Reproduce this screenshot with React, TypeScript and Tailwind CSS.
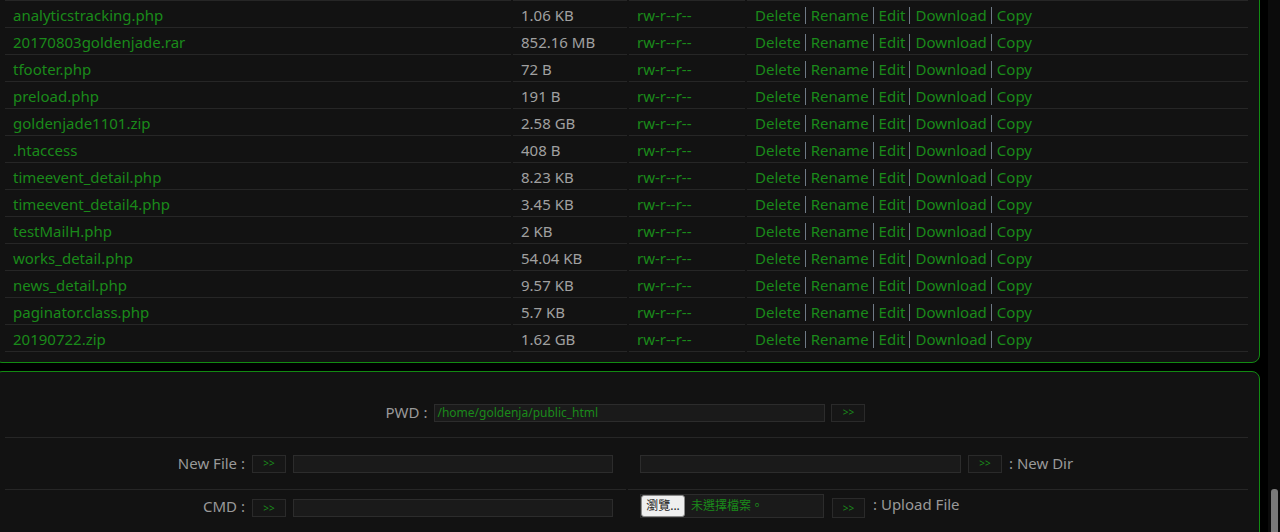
const FILES = [
  { name: "analyticstracking.php", size: "1.06 KB" },
  { name: "20170803goldenjade.rar", size: "852.16 MB" },
  { name: "tfooter.php", size: "72 B" },
  { name: "preload.php", size: "191 B" },
  { name: "goldenjade1101.zip", size: "2.58 GB" },
  { name: ".htaccess", size: "408 B" },
  { name: "timeevent_detail.php", size: "8.23 KB" },
  { name: "timeevent_detail4.php", size: "3.45 KB" },
  { name: "testMailH.php", size: "2 KB" },
  { name: "works_detail.php", size: "54.04 KB" },
  { name: "news_detail.php", size: "9.57 KB" },
  { name: "paginator.class.php", size: "5.7 KB" },
  { name: "20190722.zip", size: "1.62 GB" },
];

const ACTIONS = ["Delete", "Rename", "Edit", "Download", "Copy"];

function Go() {
  return (
    <span className="flex h-[18px] w-[34px] items-center justify-center border border-[#2a2a2a] bg-[#161616] text-[10px] text-[#1a8a1a]">
      &gt;&gt;
    </span>
  );
}

function Field({ w, value }: { w: string; value?: string }) {
  return (
    <span className={`flex h-[18px] items-center border border-[#2c2c2c] bg-[#1a1a1a] px-[2px] text-[12px] text-[#1a8a1a] ${w}`}>
      {value}
    </span>
  );
}

export default function App() {
  return (
    <div
      className="flex h-[532px] w-[1280px] overflow-hidden bg-black text-[15px]"
      style={{ fontFamily: '"Noto Sans", "Noto Sans CJK TC", sans-serif' }}
    >
      <div className="w-[1268px] shrink-0">
        {/* file list, scrolled so only its tail shows */}
        <div className="-ml-[6px] -mt-[27px] w-[1266px] rounded-[8px] border border-[#128a12] bg-[#121212] pb-[10px] pl-[10px]">
          <div className="flex h-[27px] gap-[2px]">
            <div className="w-[506px] border-b border-[#262626]" />
            <div className="w-[114px] border-b border-[#262626]" />
            <div className="w-[116px] border-b border-[#262626]" />
            <div className="w-[501px] border-b border-[#262626]" />
          </div>
          {FILES.map((f) => (
            <div key={f.name} className="flex h-[27px] gap-[2px]">
              <div className="flex w-[506px] items-center border-b border-[#262626] pl-[8px] pt-[2px] text-[#1a8a1a]">{f.name}</div>
              <div className="flex w-[114px] items-center border-b border-[#262626] pl-[8px] pt-[2px] text-[#a0a0a0]">{f.size}</div>
              <div className="flex w-[116px] items-center border-b border-[#262626] pl-[8px] pt-[2px] text-[#1a8a1a]">rw-r--r--</div>
              <div className="flex w-[501px] items-center border-b border-[#262626] pl-[8px] pt-[2px] text-[#1a8a1a]">
                {ACTIONS.map((a, i) => (
                  <span key={a} className="flex items-center">
                    {i > 0 && <span className="ml-[4px] mr-[5px] h-[17px] w-px bg-[#6f7a86]" />}
                    {a}
                  </span>
                ))}
              </div>
            </div>
          ))}
        </div>

        {/* tools */}
        <div className="-ml-[6px] mt-[8px] h-[200px] w-[1266px] rounded-[8px] border border-[#128a12] bg-[#121212] pl-[10px] text-[#999]">
          <div className="flex h-[66px] w-[1243px] items-center justify-center gap-[6px] border-b border-[#262626] pr-[2px] pt-[16px]">
            <span className="-mt-[1px] mr-[1px]">PWD :</span>
            <Field w="w-[391px]" value="/home/goldenja/public_html" />
            <Go />
          </div>

          <div className="flex h-[52px] w-[1243px] gap-[2px]">
            <div className="flex w-[621px] items-center justify-end gap-[7px] border-b border-[#262626] pr-[13px]">
              <span className="-mt-[1px]">New File :</span>
              <Go />
              <Field w="w-[320px]" />
            </div>
            <div className="flex w-[620px] items-center gap-[7px] border-b border-[#262626] pl-[12px]">
              <Field w="w-[321px]" />
              <Go />
              <span className="-mt-[1px]">: New Dir</span>
            </div>
          </div>

          <div className="flex h-[52px] w-[1243px] gap-[2px]">
            <div className="flex w-[621px] items-start justify-end gap-[7px] pr-[13px] pt-[9px]">
              <span className="-mt-[4px]">CMD :</span>
              <Go />
              <Field w="w-[320px]" />
            </div>
            <div className="flex w-[620px] items-start gap-[8px] pl-[12px] pt-[4px]">
              <span className="flex h-[24px] w-[184px] items-center gap-[6px] border border-[#2c2c2c] bg-[#1a1a1a]">
                <span className="flex h-[22px] w-[44px] items-center justify-center rounded-[3px] border border-[#8a8a8a] bg-[#efefef] text-[12px] text-[#222]">
                  瀏覽...
                </span>
                <span className="text-[12px] text-[#1a8a1a]">未選擇檔案。</span>
              </span>
              <span className="mt-[4px] flex h-[20px] w-[33px] items-center justify-center border border-[#2a2a2a] bg-[#161616] text-[10px] text-[#1a8a1a]">
                &gt;&gt;
              </span>
              <span className="-mt-[1px]">: Upload File</span>
            </div>
          </div>
        </div>
      </div>

      {/* scrollbar */}
      <div className="flex w-[12px] shrink-0 flex-col bg-[#0b0b0b] pl-[3px] pt-[489px]">
        <div className="h-[60px] w-[7px] rounded-t-[3px] bg-[#7a7a7a]" />
      </div>
    </div>
  );
}
